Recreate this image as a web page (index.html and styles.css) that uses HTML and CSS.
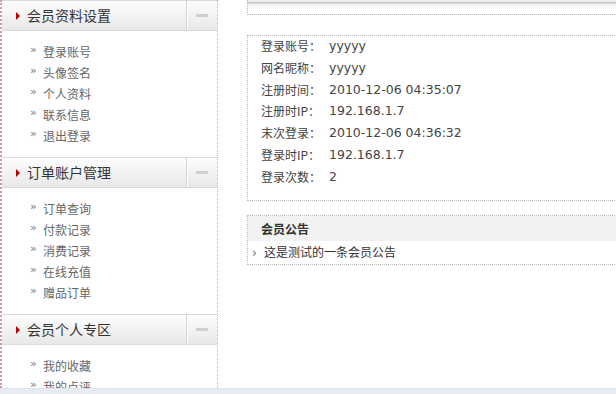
FILE: index.html
```html
<!DOCTYPE html>
<html lang="zh-CN">
<head>
    <meta charset="UTF-8">
    <title>会员中心</title>
    <link rel="stylesheet" href="styles.css">
</head>
<body>
    <div class="page">
        <aside class="sidebar">
            <div class="menu-group">
                <div class="menu-head">
                    <span class="menu-title">会员资料设置</span>
                    <span class="menu-toggle"><i></i></span>
                </div>
                <ul class="menu-list">
                    <li><a href="#">登录账号</a></li>
                    <li><a href="#">头像签名</a></li>
                    <li><a href="#">个人资料</a></li>
                    <li><a href="#">联系信息</a></li>
                    <li><a href="#">退出登录</a></li>
                </ul>
            </div>
            <div class="menu-group">
                <div class="menu-head">
                    <span class="menu-title">订单账户管理</span>
                    <span class="menu-toggle"><i></i></span>
                </div>
                <ul class="menu-list">
                    <li><a href="#">订单查询</a></li>
                    <li><a href="#">付款记录</a></li>
                    <li><a href="#">消费记录</a></li>
                    <li><a href="#">在线充值</a></li>
                    <li><a href="#">赠品订单</a></li>
                </ul>
            </div>
            <div class="menu-group">
                <div class="menu-head">
                    <span class="menu-title">会员个人专区</span>
                    <span class="menu-toggle"><i></i></span>
                </div>
                <ul class="menu-list">
                    <li><a href="#">我的收藏</a></li>
                    <li><a href="#">我的点评</a></li>
                    <li><a href="#">我的留言</a></li>
                </ul>
            </div>
        </aside>

        <main class="content">
            <div class="top-bar"></div>

            <div class="info-box">
                <table class="info-table">
                    <tr><th>登录账号：</th><td>yyyyy</td></tr>
                    <tr><th>网名昵称：</th><td>yyyyy</td></tr>
                    <tr><th>注册时间：</th><td>2010-12-06 04:35:07</td></tr>
                    <tr><th>注册时IP：</th><td>192.168.1.7</td></tr>
                    <tr><th>末次登录：</th><td>2010-12-06 04:36:32</td></tr>
                    <tr><th>登录时IP：</th><td>192.168.1.7</td></tr>
                    <tr><th>登录次数：</th><td>2</td></tr>
                </table>
            </div>

            <div class="notice-box">
                <h3 class="notice-title">会员公告</h3>
                <ul class="notice-list">
                    <li>这是测试的一条会员公告</li>
                </ul>
            </div>
        </main>
    </div>
    <div class="status-strip"></div>
</body>
</html>
```

FILE: styles.css
```css
* {
    margin: 0;
    padding: 0;
    box-sizing: border-box;
}

body {
    font-family: "Noto Sans CJK SC", "DejaVu Sans", sans-serif;
    font-size: 12px;
    color: #333;
    background-color: #fff;
    overflow: hidden;
}

.page {
    display: flex;
    align-items: flex-start;
    height: 388px;
    overflow: hidden;
}

/* left menu */
.sidebar {
    flex: 0 0 218px;
    height: 388px;
    border-left: 2px dotted #d29a9a;
    border-right: 1px dotted #b8b8b8;
    overflow: hidden;
}

.menu-head {
    display: flex;
    height: 31px;
    border-top: 1px solid #dadada;
    border-bottom: 1px solid #dadada;
    background: linear-gradient(to bottom, #fdfdfd, #e8e8e8);
}

.menu-title {
    flex: 1;
    position: relative;
    padding-left: 25px;
    font-size: 14px;
    line-height: 29px;
    color: #333;
}

.menu-title::before {
    content: "";
    position: absolute;
    left: 14px;
    top: 11px;
    border-top: 4px solid transparent;
    border-bottom: 4px solid transparent;
    border-left: 4px solid #b00000;
}

.menu-toggle {
    flex: 0 0 31px;
    display: flex;
    justify-content: center;
    align-items: center;
    border-left: 1px solid #d6d6d6;
    box-shadow: inset 1px 0 0 #fff;
}

.menu-toggle i {
    width: 12px;
    height: 3px;
    background-color: #cfcfcf;
}

.menu-list {
    list-style: none;
    padding: 10px 0 11px 28px;
}

.menu-list li {
    line-height: 21px;
}

.menu-list li::before {
    content: "»";
    display: inline-block;
    width: 13px;
    font-family: "DejaVu Sans", sans-serif;
    font-size: 11px;
    color: #777;
    vertical-align: top;
    line-height: 18px;
}

.menu-list a {
    color: #666;
    text-decoration: none;
}

.menu-list a:hover {
    color: #b00000;
}

/* right side */
.content {
    flex: 0 0 420px;
    margin-left: 29px;
}

.top-bar {
    height: 15px;
    border-left: 1px dotted #b8b8b8;
    border-bottom: 1px dotted #b8b8b8;
    background: linear-gradient(to bottom, #ededed 0, #ededed 2px, #c6c6c6 2px, #c6c6c6 3px, #efefef 4px, #fff 9px);
}

.info-box {
    margin-top: 20px;
    padding: 0 0 12px 13px;
    border: 1px dotted #b8b8b8;
}

.info-table {
    margin-top: -1px;
    border-collapse: collapse;
}

.info-table th,
.info-table td {
    height: 21.8px;
    line-height: 21.8px;
    padding: 0;
    text-align: left;
    white-space: nowrap;
}

.info-table th {
    width: 68px;
    font-weight: normal;
    color: #444;
}

.info-table td {
    font-family: "DejaVu Sans", "Noto Sans CJK SC", sans-serif;
    font-size: 12.5px;
    color: #444;
}

.notice-box {
    margin-top: 14px;
    border: 1px dotted #b8b8b8;
}

.notice-title {
    height: 25px;
    padding-left: 13px;
    line-height: 25px;
    font-size: 12px;
    font-weight: bold;
    color: #333;
    background-color: #f2f2f2;
}

.notice-list {
    list-style: none;
}

.notice-list li {
    padding-left: 4px;
    line-height: 21px;
    color: #333;
}

.notice-list li::before {
    content: "›";
    display: inline-block;
    width: 12px;
    font-family: "DejaVu Sans", sans-serif;
    color: #666;
}

.status-strip {
    height: 6px;
    background-color: #e7ecf5;
    border-top: 1px solid #dfe5ee;
}
```
